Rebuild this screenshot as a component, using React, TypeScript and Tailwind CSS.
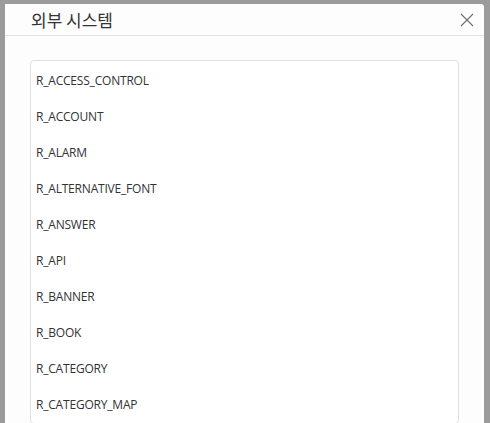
const items = [
  "R_ACCESS_CONTROL",
  "R_ACCOUNT",
  "R_ALARM",
  "R_ALTERNATIVE_FONT",
  "R_ANSWER",
  "R_API",
  "R_BANNER",
  "R_BOOK",
  "R_CATEGORY",
  "R_CATEGORY_MAP",
];

export default function App() {
  return (
    <div
      className="h-[423px] w-[490px] overflow-hidden bg-[#9b9b9b] pl-[5px] pr-[6px] pt-[4px]"
      style={{ fontFamily: '"Open Sans", "Noto Sans CJK KR", sans-serif' }}
    >
      <div className="h-full rounded-tr-[3px] bg-[#fdfdfd]">
        <div className="flex h-[32px] items-center justify-between border-b border-[#e2e2e2] pl-[26px] pr-[10px]">
          <h2 className="text-[17px] text-[#333]" style={{ fontFamily: '"Noto Sans CJK KR", sans-serif' }}>
            외부 시스템
          </h2>
          <svg width="14" height="14" viewBox="0 0 14 14" className="mt-[1px]">
            <path d="M1 1 L13 13 M13 1 L1 13" stroke="#6b6b78" strokeWidth="1.1" fill="none" />
          </svg>
        </div>
        <div className="px-[25px] pt-[24px]">
          <div className="rounded-[4px] border border-[#e0e0e0] bg-white pt-[2px]">
            {items.map((item) => (
              <div
                key={item}
                className="flex h-[36px] items-center pl-[5px] text-[12px] tracking-[-0.2px] text-[#333]"
              >
                {item}
              </div>
            ))}
          </div>
        </div>
      </div>
    </div>
  );
}
